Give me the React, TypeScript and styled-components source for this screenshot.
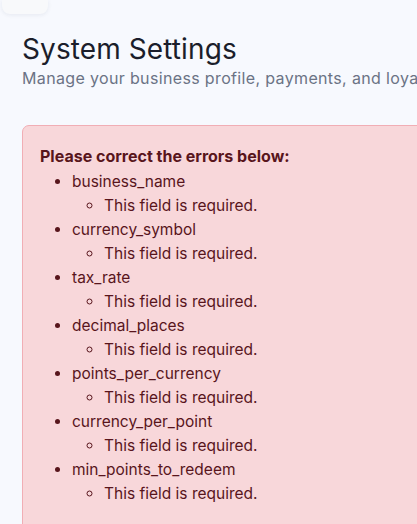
import React from 'react';
import styled, { createGlobalStyle } from 'styled-components';

const errors: Record<string, string[]> = {
  business_name: ['This field is required.'],
  currency_symbol: ['This field is required.'],
  tax_rate: ['This field is required.'],
  decimal_places: ['This field is required.'],
  points_per_currency: ['This field is required.'],
  currency_per_point: ['This field is required.'],
  min_points_to_redeem: ['This field is required.'],
};

const App = () => {
  return (
    <>
      <GlobalStyle />
      <Page>
        <TopCard />
        <Main>
          <Header>
            <Title>System Settings</Title>
            <Subtitle>Manage your business profile, payments, and loyalty settings.</Subtitle>
          </Header>
          <Alert>
            <AlertHeading>Please correct the errors below:</AlertHeading>
            <FieldList>
              {Object.entries(errors).map(([field, messages]) => (
                <li key={field}>
                  {field}
                  <MessageList>
                    {messages.map((msg) => (
                      <li key={msg}>{msg}</li>
                    ))}
                  </MessageList>
                </li>
              ))}
            </FieldList>
          </Alert>
        </Main>
      </Page>
    </>
  );
};

const GlobalStyle = createGlobalStyle`
  html, body {
    margin: 0;
    overflow: hidden;
  }
  body {
    background: #f7f9fe;
    font-family: Inter, "Open Sans", sans-serif;
  }
`;

const Page = styled.div`
  min-height: 524px;
`;

const TopCard = styled.div`
  margin-left: 2px;
  width: 46px;
  height: 14px;
  background: #f8f9fb;
  border-radius: 0 0 8px 8px;
  box-shadow: 0 1px 4px rgba(30, 40, 80, 0.08);
`;

const Main = styled.main`
  padding-left: 22px;
`;

const Header = styled.div`
  margin-top: 16px;
  margin-bottom: 37px;
`;

const Title = styled.h1`
  margin: 0;
  font-size: 28px;
  font-weight: 400;
  line-height: 38px;
  color: #1b1e2b;
  letter-spacing: 0.1px;
`;

const Subtitle = styled.p`
  margin: 0;
  width: max-content;
  font-size: 16px;
  line-height: 20px;
  color: #6b7385;
  letter-spacing: 0.35px;
  white-space: nowrap;
`;

const Alert = styled.div`
  margin-right: -300px;
  background: #f8d7da;
  border: 1px solid #f1aeb5;
  border-radius: 7px;
  padding: 18px 17px 16px;
  color: #58151c;
`;

const AlertHeading = styled.strong`
  display: block;
  margin-bottom: 2px;
  font-size: 16px;
  line-height: 24px;
  font-weight: 700;
`;

const FieldList = styled.ul`
  margin: 0 0 16px;
  padding-left: 32px;
  font-size: 15.5px;
  line-height: 24px;
`;

const MessageList = styled.ul`
  margin: 0;
  padding-left: 32px;
  list-style-type: circle;
`;

export default App;
